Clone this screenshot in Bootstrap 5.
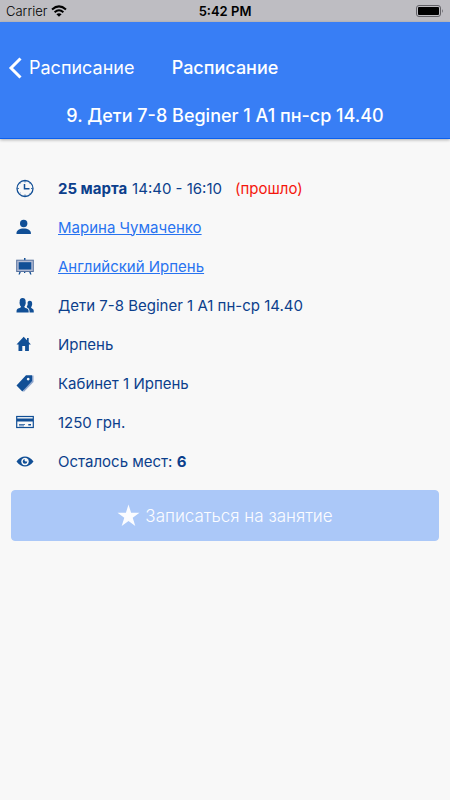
<!DOCTYPE html>
<html lang="ru">
<head>
<meta charset="utf-8">
<meta name="viewport" content="width=device-width, initial-scale=1">
<title>Расписание</title>
<link href="https://cdn.jsdelivr.net/npm/bootstrap@5.3.0/dist/css/bootstrap.min.css" rel="stylesheet">
<style>
  body { font-family: Inter, "Liberation Sans", sans-serif; background: #f8f8f8; color: #0c3f8c; }
  .status-bar { background: #bebdc2; color: #000; height: 22px; font-size: 13px; line-height: 22px; padding: 0 6px; }
  .carrier { font-weight: 300; }
  .top-header { background: #387ef5; border-bottom: 1px solid #0c60ee; box-shadow: 0 1px 3px rgba(0,0,0,.3); color: #fff; padding-top: 24px; }
  .title-row { height: 44px; }
  .screen-title { font-size: 18px; line-height: 24px; font-weight: 500; }
  .back-btn { font-size: 18px; line-height: 24px; color: #fff; gap: 6px; padding-left: 8px; }
  .group-title { font-size: 18px; line-height: 24px; padding: 14px 8px 10px; }
  .details { padding: 30px 16px 9px; }
  .detail-row { height: 39px; font-size: 15px; line-height: 20px; font-weight: 400; gap: 24px; }
  .detail-row svg { width: 18px; height: 18px; flex: none; fill: #114f96; overflow: visible; }
  .detail-row a { color: #2873f0; }
  .lesson-time { gap: 5px; }
  .past { color: #f5160c; margin-left: 8px; }
  .signup { --bs-btn-disabled-bg: #abc8f8; --bs-btn-disabled-border-color: #abc8f8; --bs-btn-disabled-color: #fbfcff; --bs-btn-disabled-opacity: 1; height: 51px; font-size: 17px; line-height: 24px; font-weight: 300; border-radius: 4px; gap: 5px; }
  .signup-wrap { padding: 0 11px; }
</style>
</head>
<body>
<div class="status-bar d-flex align-items-center">
  <div class="col d-flex align-items-center gap-1">
    <span class="carrier">Carrier</span>
    <svg width="16" height="12" viewBox="0 0 16 12" fill="none" stroke="#000" stroke-width="2" aria-hidden="true"><path d="M1 4.500Q8-1.800 15 4.500M3.600 7.200Q8 3.400 12.400 7.200"/><path d="M8 11.800 5.400 9.200Q8 7.200 10.600 9.200Z" fill="#000" stroke="none"/></svg>
  </div>
  <div class="fw-semibold">5:42 PM</div>
  <div class="col d-flex justify-content-end">
    <svg width="28" height="12" viewBox="0 0 28 12" aria-hidden="true"><rect x=".5" y=".5" width="24" height="11" rx="2.500" fill="none" stroke="#626166"/><rect x="2" y="2" width="21" height="8" rx="1" fill="#000"/><path d="M26 4q1.800 2 0 4z" fill="#626166"/></svg>
  </div>
</div>
<header class="top-header">
  <div class="title-row d-flex align-items-center">
    <div class="col">
      <button type="button" class="back-btn btn border-0 py-0 pe-0 d-flex align-items-center">
        <svg width="15" height="24" viewBox="0 0 15 24" fill="none" stroke="#fff" stroke-width="3" aria-hidden="true"><path d="M12.500 2.500 3 12l9.500 9.500"/></svg>
        <span>Расписание</span>
      </button>
    </div>
    <h1 class="screen-title m-0">Расписание</h1>
    <div class="col"></div>
  </div>
  <h2 class="group-title m-0 text-center">9. Дети 7-8 Beginer 1 A1 пн-ср 14.40</h2>
</header>
<main>
  <ul class="details list-unstyled m-0">
    <li class="detail-row d-flex align-items-center">
      <svg viewBox="0 0 18 18" aria-hidden="true"><circle cx="9" cy="8.500" r="8" fill="none" stroke="#114f96" stroke-width="1.300"/><path d="M8.500 4V8.800H13.500" fill="none" stroke="#114f96" stroke-width="1.500"/><path d="M9 1v1.500M9 14.500V16M1.500 8.500H3M15 8.500h1.500M3.700 3.200l.8.800M13.500 13l.8.800M3.700 13.800l.8-.8M13.500 4l.8-.8" stroke="#114f96" stroke-width=".8"/></svg>
      <div class="lesson-time d-flex"><strong class="fw-bold">25 марта</strong> <span>14:40 - 16:10</span> <span class="past">(прошло)</span></div>
    </li>
    <li class="detail-row d-flex align-items-center">
      <svg viewBox="0 0 18 18" aria-hidden="true"><circle cx="7.700" cy="4.500" r="3.700"/><path d="M.5 15v-1c0-2.500 3-4.500 7.200-4.500s7.200 2 7.200 4.500v1z"/></svg>
      <a href="#">Марина Чумаченко</a>
    </li>
    <li class="detail-row d-flex align-items-center">
      <svg viewBox="0 0 18 18" aria-hidden="true"><path d="M8 0h1.500V2.500H8zM8 13.500h1.300V15H8zM3.500 13.500H5l-1.200 3H2.500zM13 13.500h1.500l1 3h-1.300z"/><rect x=".7" y="2.200" width="16.600" height="11.300" fill="#b3bbd3" stroke="#58739f" stroke-width="1"/><rect x="2.700" y="4.200" width="12.600" height="7.300"/></svg>
      <a href="#">Английский Ирпень</a>
    </li>
    <li class="detail-row d-flex align-items-center">
      <svg viewBox="0 0 18 18" aria-hidden="true"><path d="M.5 15.500c0-3 .5-3.700 2.200-4.200 1.800-.5 2.300-1 2.300-1.800-.9-.7-1.200-1.600-1.300-2.800-.5-1 0-1.300 0-2C3.500 2.500 4.500 1 6.600 1s3.300 1.500 3 3.700c0 .7.500 1 0 2-.2 1.200-.5 2.100-1.300 2.800 0 .8.500 1.300 2.200 1.800s2.200 1.200 2.200 4.200z"/><path d="M10.800 9.300c1-.8 1-2 .8-3-.2-1.600.6-2.600 2.200-2.600s2.500 1.100 2.300 2.800c.4.800-.1 1.400-.2 2.100-.2.900-.4 1.100-.8 1.500-.1 1 .3 1.200 1.300 1.600 1.300.5 1.400 1.300 1.400 3.800h-4.200c0-3-.4-4-1.800-4.600-.6-.2-1-.6-1-1.600z"/></svg>
      <span>Дети 7-8 Beginer 1 A1 пн-ср 14.40</span>
    </li>
    <li class="detail-row d-flex align-items-center">
      <svg viewBox="0 0 18 18" aria-hidden="true"><path d="M7.700.8.500 8.500h2V15h3.800V10h2.800v5h3.800V8.500h2L12.700 6V2h-1.700v2.300z"/></svg>
      <span>Ирпень</span>
    </li>
    <li class="detail-row d-flex align-items-center">
      <svg viewBox="0 0 18 18" aria-hidden="true"><path d="M16 .5h1.500v6.500L8 16.800l-1-.5z" fill="#8fa6cd"/><path fill-rule="evenodd" d="M10 .3H16v5.700L6.300 16.500.5 10.500zM12.200 2.700a1.400 1.400 0 1 0 .01 0z"/></svg>
      <span>Кабинет 1 Ирпень</span>
    </li>
    <li class="detail-row d-flex align-items-center">
      <svg viewBox="0 0 18 18" aria-hidden="true"><rect x=".7" y="2.500" width="16.600" height="11" fill="none" stroke="#114f96" stroke-width="1.200"/><path d="M1 4.500h16v3H1z"/><path d="M3 10h6v.8H3zM3 11.500h5v.8H3zM12.300 10h2.700v1.500h-2.700z"/></svg>
      <span>1250 грн.</span>
    </li>
    <li class="detail-row d-flex align-items-center">
      <svg viewBox="0 0 18 18" aria-hidden="true"><path fill-rule="evenodd" d="M.5 8.500C3 5 6 3.500 9 3.500s6 1.500 8.500 5c-2.500 3.500-5.500 5-8.500 5s-6-1.500-8.500-5zM9 4.700a3.800 3.800 0 1 0 .01 0z"/><path d="M9 6.200a2.300 2.300 0 1 0 2.300 2.300H9.500L8.500 7.500z"/></svg>
      <span>Осталось мест: <strong class="fw-bold">6</strong></span>
    </li>
  </ul>
  <div class="signup-wrap">
    <button type="button" disabled class="signup btn w-100 d-flex align-items-center justify-content-center">
      <svg width="23" height="23" viewBox="0 0 23 23" fill="#fbfcff" aria-hidden="true"><path d="M11.500.5 14.100 8.700H22.500L15.700 13.700 18.300 22 11.500 16.900 4.700 22 7.300 13.700.5 8.700H8.900z"/></svg>
      <span>Записаться на занятие</span>
    </button>
  </div>
</main>
<script src="https://cdn.jsdelivr.net/npm/bootstrap@5.3.0/dist/js/bootstrap.bundle.min.js"></script>
</body>
</html>
